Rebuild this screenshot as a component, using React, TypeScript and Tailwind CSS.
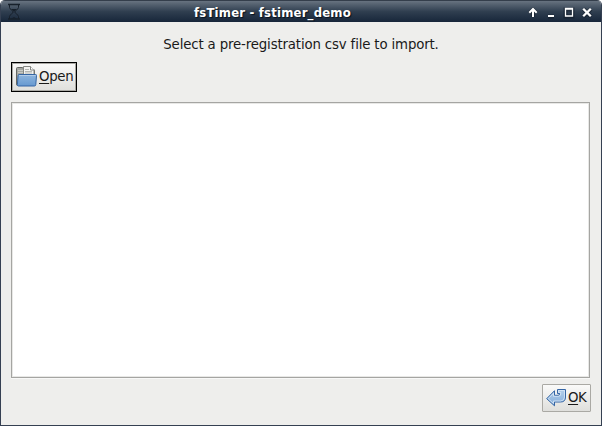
import React from 'react';

function Hourglass() {
  return (
    <svg width="14" height="18" viewBox="0 0 14 18" className="block" fill="none" stroke="#17202b">
      <path d="M1 1.500h12M1 16h12" strokeWidth="1.600" />
      <path d="M2.500 2v2.500c0 2 3.700 2.900 3.700 4.500S2.500 11.500 2.500 13.500V16M11.500 2v2.500c0 2-3.700 2.900-3.700 4.500s3.700 2.500 3.700 4.500V16" />
      <path d="M4 6h6L7 8.500zM4.500 15.500l2.500-1.500 2.500 1.500z" fill="#17202b" stroke="none" />
    </svg>
  );
}

function FolderIcon() {
  return (
    <svg width="22" height="22" viewBox="0 0 22 22" className="block">
      <path d="M.500 18V2.500q0-1 1-1h5l1.500 2h9.500q1 0 1 1V18q0 1.500-1 1.500H1.500q-1 0-1-1.500z" fill="#a5a7a2" stroke="#666864" />
      <path d="M2 4.500h5M2 6.500h5" stroke="#c8cac5" />
      <path d="M7.500 12V.500h7l3.500 3.500V12z" fill="#f3f3f1" stroke="#858783" />
      <path d="M14.500.500V4H18" fill="#fff" stroke="#858783" />
      <path d="M9 3.500h4M9 5.500h7M9 7h7" stroke="#b5b7b3" />
      <path d="M3 8.500h16.700q.9 0 .8 1l-.7 9q-.1 1.500-1.300 1.500H2.300q-1 0-.9-1.500l.7-9q.1-1 .9-1z" fill="url(#folder)" stroke="#3465a4" />
      <path d="M3 9.500h16.500" stroke="#b0cbe8" />
      <defs>
        <linearGradient id="folder" x1="0" y1="0" x2="0" y2="1">
          <stop stopColor="#8fb5de" />
          <stop offset="1" stopColor="#6699d0" />
        </linearGradient>
      </defs>
    </svg>
  );
}

function ReturnIcon() {
  return (
    <svg width="21" height="18" viewBox="0 0 21 18" className="block">
      <path d="M.700 9.700L8.500 1.700v4.600h3.500q1.800 0 1.800-1.800h-2.300v-4h8V8q0 5-5 5h-6v3.800z" fill="url(#arrow)" stroke="#3465a4" strokeLinejoin="round" />
      <path d="M2.200 9.700l5.300-5.400v3h5q2.300 0 2.300-3.500V3.500h-2.300v-2h6V8q0 4-4 4h-7v2.500z" fill="none" stroke="#dae8f6" strokeWidth=".8" />
      <defs>
        <linearGradient id="arrow" x1="0" y1="0" x2="0" y2="1">
          <stop stopColor="#b4cfea" />
          <stop offset="1" stopColor="#83addb" />
        </linearGradient>
      </defs>
    </svg>
  );
}

function WindowControls() {
  return (
    <svg width="66" height="12" viewBox="0 0 66 12" className="block" fill="none" stroke="#fff">
      <g stroke="#0b1420" strokeWidth="4" opacity=".45">
        <path d="M5 10V2M1.500 6L5 2.500 8.500 6M20 9.500h6M37.500 2.500h7v7h-7zM55.500 2l7.500 7.500M63 2l-7.500 7.500" />
      </g>
      <path d="M5 10V2M1.300 5.700L5 2l3.700 3.700" strokeWidth="2" />
      <path d="M20 9h6" strokeWidth="2" />
      <path d="M37.500 1.500h7v7.500h-7zM37 2h8" strokeWidth="1.300" />
      <path d="M55.200 1.700l7.600 7.600M62.800 1.700l-7.600 7.600" strokeWidth="2.300" />
    </svg>
  );
}

export default function App() {
  return (
    <div className="h-[426px] w-[602px] bg-white font-['DejaVu_Sans',sans-serif] text-[13.333px] tracking-[-0.155px] text-[#1a1a1a]">
      <div className="flex h-full flex-col overflow-hidden rounded-t-[5px] border border-t-0 border-[#354052] bg-[#eeeeec]">
        <header className="flex h-[22px] shrink-0 items-center border-t border-[#343e4b] bg-linear-to-b from-[#687380] via-[#303f50] via-50% to-[#17263a] pl-[6px] pr-[7px]">
          <Hourglass />
          <h1 className="ml-[173px] w-[180px] whitespace-nowrap pt-[3px] text-[11.7px] leading-[16px] font-bold tracking-[0.19px] text-white [text-shadow:1px_1px_1px_#08111c]">
            fsTimer - fstimer_demo
          </h1>
          <div className="ml-auto pt-[2px]"><WindowControls /></div>
        </header>
        <main className="flex min-h-0 flex-1 flex-col px-[10px] pb-[13px]">
          <p className="mt-[14px] h-[18px] whitespace-nowrap text-center leading-[18px]">
            Select a pre-registration csv file to import.
          </p>
          <button className="mt-[8px] flex h-[30px] w-[66px] shrink-0 items-center border border-black bg-linear-to-b from-[#fafaf9] to-[#dfdfdc] pl-[4px] shadow-[inset_0_0_0_1px_#aaa9a4]">
            <FolderIcon />
            <span className="ml-px leading-[18px] tracking-[-0.3px]"><span className="underline underline-offset-2">O</span>pen</span>
          </button>
          <div className="mt-[10px] h-[276px] w-[579px] shrink-0 border border-[#a5a5a2] bg-white shadow-[inset_0_0_0_1px_#e8e8e6,0_1px_0_#f8f8f7]" />
          <button className="mt-[6px] flex h-[28px] w-[49px] shrink-0 items-center self-end rounded-[1px] border border-[#aaa9a4] bg-linear-to-b from-[#fafaf9] to-[#dfdfdc] pl-[3px]">
            <ReturnIcon />
            <span className="ml-px leading-[18px] tracking-[-0.4px]"><span className="underline underline-offset-2">O</span>K</span>
          </button>
        </main>
      </div>
    </div>
  );
}
